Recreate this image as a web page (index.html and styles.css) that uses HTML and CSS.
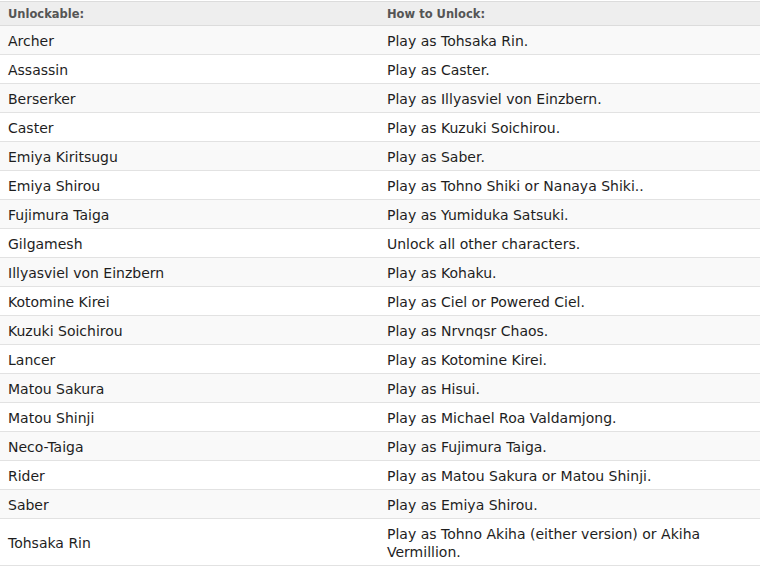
FILE: index.html
```html
<!DOCTYPE html>
<html>
<head>
<meta charset="utf-8">
<link rel="stylesheet" href="styles.css">
</head>
<body>
<table class="unlocks">
  <thead>
    <tr><th class="c1">Unlockable:</th><th class="c2">How to Unlock:</th></tr>
  </thead>
  <tbody>
    <tr><td>Archer</td><td>Play as Tohsaka Rin.</td></tr>
    <tr><td>Assassin</td><td>Play as Caster.</td></tr>
    <tr><td>Berserker</td><td>Play as Illyasviel von Einzbern.</td></tr>
    <tr><td>Caster</td><td>Play as Kuzuki Soichirou.</td></tr>
    <tr><td>Emiya Kiritsugu</td><td>Play as Saber.</td></tr>
    <tr><td>Emiya Shirou</td><td>Play as Tohno Shiki or Nanaya Shiki..</td></tr>
    <tr><td>Fujimura Taiga</td><td>Play as Yumiduka Satsuki.</td></tr>
    <tr><td>Gilgamesh</td><td>Unlock all other characters.</td></tr>
    <tr><td>Illyasviel von Einzbern</td><td>Play as Kohaku.</td></tr>
    <tr><td>Kotomine Kirei</td><td>Play as Ciel or Powered Ciel.</td></tr>
    <tr><td>Kuzuki Soichirou</td><td>Play as Nrvnqsr Chaos.</td></tr>
    <tr><td>Lancer</td><td>Play as Kotomine Kirei.</td></tr>
    <tr><td>Matou Sakura</td><td>Play as Hisui.</td></tr>
    <tr><td>Matou Shinji</td><td>Play as Michael Roa Valdamjong.</td></tr>
    <tr><td>Neco-Taiga</td><td>Play as Fujimura Taiga.</td></tr>
    <tr><td>Rider</td><td>Play as Matou Sakura or Matou Shinji.</td></tr>
    <tr><td>Saber</td><td>Play as Emiya Shirou.</td></tr>
    <tr><td>Tohsaka Rin</td><td>Play as Tohno Akiha (either version) or Akiha Vermillion.</td></tr>
  </tbody>
</table>
</body>
</html>
```
FILE: styles.css
```css
html, body {
  margin: 0;
  padding: 0;
  background: #fff;
}
body {
  padding-top: 1px;
  font-family: "DejaVu Sans", Verdana, sans-serif;
  color: #1e1e1e;
}
.unlocks {
  width: 760px;
  border-collapse: collapse;
  table-layout: fixed;
}
.unlocks th {
  background: #eeeeee;
  color: #555;
  font-size: 11.5px;
  font-weight: bold;
  text-align: left;
  line-height: 14px;
  padding: 5px 8px 4px;
  border-top: 1px solid #dcdcdc;
  border-bottom: 1px solid #dcdcdc;
}
.unlocks .c1 {
  width: 363px;
}
.unlocks td {
  font-size: 14px;
  line-height: 18px;
  padding: 6px 8px 4px;
  border-bottom: 1px solid #e2e2e2;
  vertical-align: middle;
}
.unlocks tbody tr:nth-child(odd) {
  background: #f9f9f9;
}
.unlocks tbody tr:nth-child(even) {
  background: #fff;
}
```
